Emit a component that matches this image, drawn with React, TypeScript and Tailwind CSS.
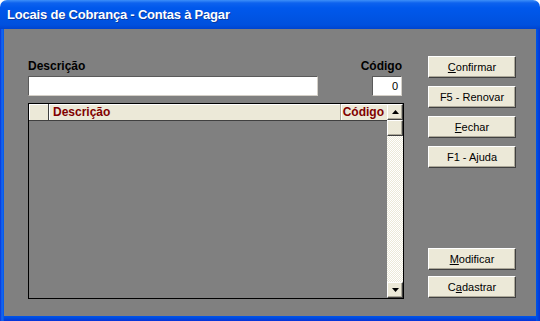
import React from "react";

const font = { fontFamily: '"Liberation Sans", Arial, sans-serif' };

function Btn({ children }: { children: React.ReactNode }) {
  return (
    <div className="w-[88px] h-[22px] flex items-center justify-center bg-[#ece9d8] border border-t-white border-l-white border-r-[#404040] border-b-[#404040] shadow-[inset_-1px_-1px_0_#aca899] text-[11px] text-black leading-none">
      {children}
    </div>
  );
}

function Arrow({ up }: { up: boolean }) {
  return (
    <div className="w-[16px] h-[16px] flex items-center justify-center bg-[#ece9d8] border border-t-white border-l-white border-r-[#404040] border-b-[#404040] shadow-[inset_-1px_-1px_0_#aca899]">
      <svg width="7" height="4" viewBox="0 0 7 4">
        {up ? <polygon points="3.5,0 7,4 0,4" fill="#000" /> : <polygon points="0,0 7,0 3.5,4" fill="#000" />}
      </svg>
    </div>
  );
}

export default function App() {
  return (
    <div className="w-[540px] h-[321px] bg-white" style={font}>
      <div className="w-[540px] h-[321px] flex flex-col rounded-t-[7px] overflow-hidden">
        <div className="h-[29px] shrink-0 flex items-center pl-[7px] bg-[linear-gradient(to_bottom,#3d8ff8_0px,#0d62ee_3px,#0058ec_8px,#0054e3_18px,#0050de_25px,#0044cf_29px)]">
          <span className="text-white font-bold text-[13px] leading-none tracking-[-0.2px] [text-shadow:1px_1px_0_#0a3aa0]">
            Locais de Cobrança - Contas à Pagar
          </span>
        </div>
        <div className="flex-1 flex bg-[#0054e3]">
          <div className="w-[4px] bg-[linear-gradient(to_right,#0831d9,#166aee,#0055ea)]" />
          <div className="flex-1 flex flex-col">
            <div className="flex-1 bg-[#808080] flex pl-[24px] pt-[27px]">
              <div className="w-[376px] flex flex-col">
                <div className="h-[20px] flex items-end justify-between pb-[3px]">
                  <span className="text-[12px] leading-[14px] font-bold text-black">Descrição</span>
                  <span className="text-[12px] leading-[14px] font-bold text-black mr-[2px]">Código</span>
                </div>
                <div className="h-[20px] flex justify-between">
                  <div className="w-[290px] h-[20px] bg-white border border-t-[#5a5a5a] border-l-[#5a5a5a] border-r-[#d4d0c8] border-b-[#d4d0c8]" />
                  <div className="w-[30px] h-[20px] mr-[2px] bg-white border border-t-[#5a5a5a] border-l-[#5a5a5a] border-r-[#d4d0c8] border-b-[#d4d0c8] flex items-center justify-end pr-[3px] text-[11px] text-black">
                    0
                  </div>
                </div>
                <div className="mt-[7px] h-[196px] border border-black flex">
                  <div className="flex-1 flex flex-col">
                    <div className="h-[17px] flex border-b border-b-[#404040]">
                      <div className="w-[20px] bg-[#ece9d8] border-r border-r-[#404040] shadow-[inset_1px_1px_0_white]" />
                      <div className="flex-1 bg-[#ece9d8] flex items-center pl-[4px] shadow-[inset_1px_1px_0_white]">
                        <span className="text-[12px] font-bold text-[#800000] leading-none">Descrição</span>
                      </div>
                      <div className="w-[47px] bg-[#ece9d8] border-l border-l-[#aca899] flex items-center justify-end pr-[3px] shadow-[inset_1px_1px_0_white]">
                        <span className="text-[12px] font-bold text-[#800000] leading-none">Código</span>
                      </div>
                    </div>
                    <div className="flex-1 bg-[#808080]" />
                  </div>
                  <div className="w-[16px] flex flex-col bg-[#f4f3ee]">
                    <Arrow up />
                    <div className="w-[16px] h-[16px] bg-[#ece9d8] border border-t-white border-l-white border-r-[#404040] border-b-[#404040] shadow-[inset_-1px_-1px_0_#aca899]" />
                    <div className="flex-1 bg-[repeating-conic-gradient(#ffffff_0%_25%,#ece9d8_0%_50%)] bg-[length:2px_2px]" />
                    <Arrow up={false} />
                  </div>
                </div>
              </div>
              <div className="ml-[24px] flex flex-col">
                <div className="flex flex-col gap-[8px]">
                  <Btn><span><u>C</u>onfirmar</span></Btn>
                  <Btn>F5 - Renovar</Btn>
                  <Btn><span><u>F</u>echar</span></Btn>
                  <Btn>F1 - Ajuda</Btn>
                </div>
                <div className="mt-[80px] flex flex-col gap-[6px]">
                  <Btn><span><u>M</u>odificar</span></Btn>
                  <Btn><span>C<u>a</u>dastrar</span></Btn>
                </div>
              </div>
            </div>
            <div className="h-[5px] bg-[linear-gradient(to_bottom,#0055ea,#0048dc,#0831d9)]" />
          </div>
          <div className="w-[4px] bg-[linear-gradient(to_right,#0055ea,#0048dc,#0831d9)]" />
        </div>
      </div>
    </div>
  );
}
